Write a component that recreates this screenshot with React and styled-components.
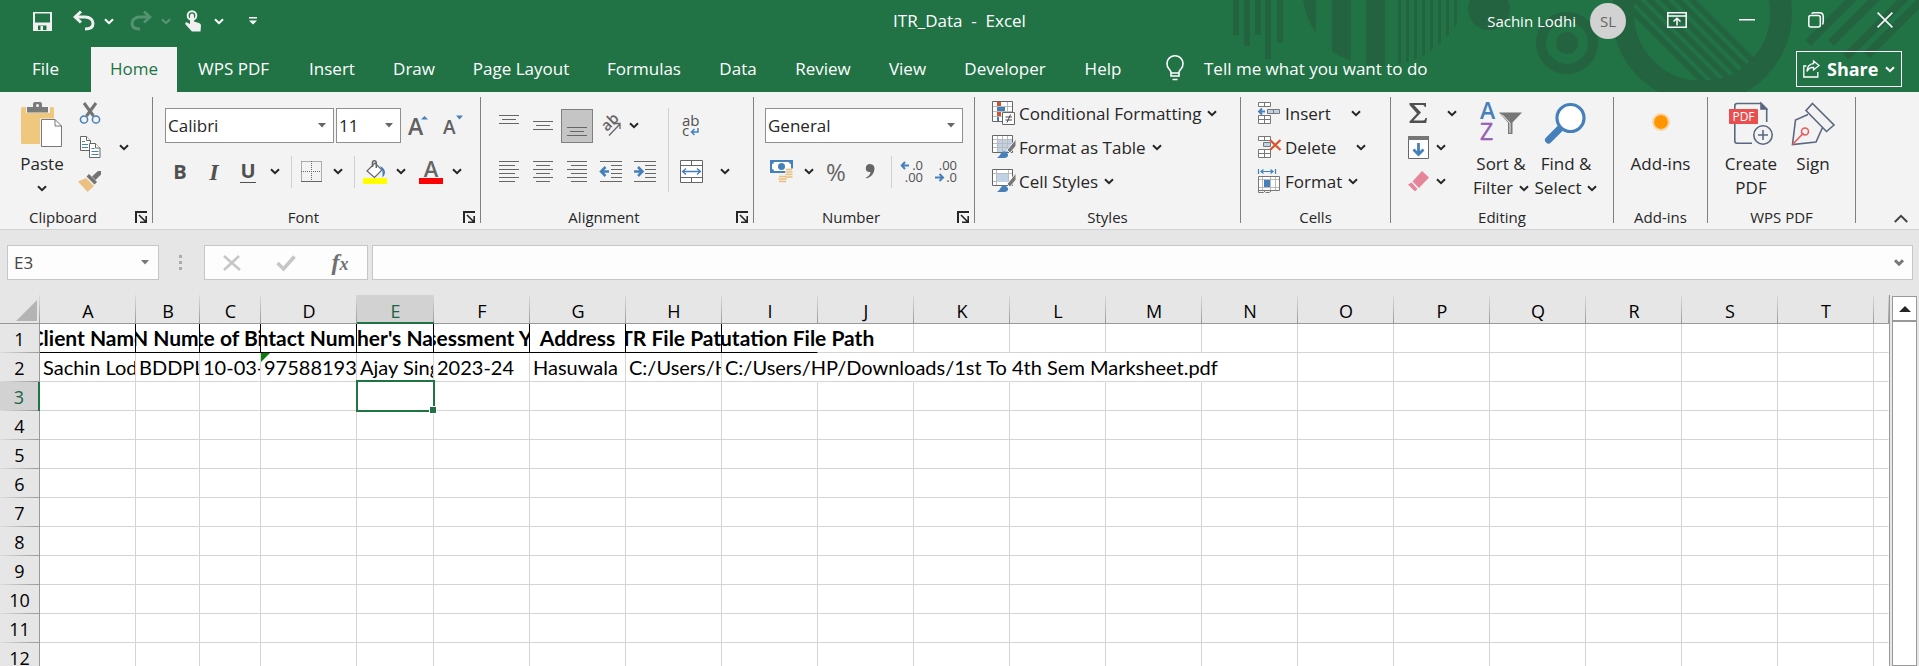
import React from "react";
import styled, { createGlobalStyle, css } from "styled-components";

const GREEN = "#217346";
const INK = "#262626";
const GREY = "#666666";
const BLUE = "#4680ba";

const GlobalStyle = createGlobalStyle`
  *, *::before, *::after { box-sizing: border-box; }
  html, body { margin: 0; background: #e6e6e6; }
  body, button, input, select {
    font-family: "Open Sans", "Noto Sans", sans-serif;
    font-size: 17px;
    color: ${INK};
  }
  button {
    border: 0;
    padding: 0;
    background: none;
    white-space: nowrap;
  }
  svg { display: block; flex: none; overflow: visible; }
`;

const Window = styled.div`
  display: flex;
  flex-direction: column;
  height: 100vh;
  overflow: hidden;
`;

/* ---------- title bar and tabs ---------- */

const Header = styled.header`
  position: relative;
  flex: none;
  overflow: hidden;
  background: ${GREEN};
  color: #fff;
`;

const Backdrop = styled.svg`
  position: absolute;
  top: 0;
  right: 0;
`;

const TitleBar = styled.div`
  position: relative;
  display: grid;
  grid-template-columns: 1fr auto 1fr;
  align-items: start;
  height: 47px;
`;

const QuickAccess = styled.div`
  display: flex;
  align-items: center;
  height: 42px;
  padding-left: 24px;
`;

const QuickButton = styled.button`
  display: flex;
  align-items: center;
  justify-content: center;
  width: ${(p) => p.$w}px;
  height: 42px;
  margin-left: ${(p) => p.$gap || 0}px;
  color: #fff;
  opacity: ${(p) => (p.disabled ? 0.25 : 1)};
`;

const DocTitle = styled.h1`
  margin: 0;
  font-size: 17px;
  font-weight: 400;
  line-height: 42px;
  white-space: pre;
`;

const WindowTools = styled.div`
  display: flex;
  align-items: center;
  justify-content: flex-end;
  height: 42px;
`;

const UserName = styled.span`
  font-size: 15px;
`;

const Avatar = styled.button`
  width: 36px;
  height: 36px;
  margin: 0 15px 0 14px;
  border-radius: 50%;
  background: #d2d2d2;
  color: #646464;
  font-size: 15px;
`;

const TabBar = styled.nav`
  position: relative;
  display: flex;
  align-items: stretch;
  height: 45px;
`;

const Tab = styled.button`
  width: ${(p) => p.$w}px;
  padding-bottom: 2px;
  color: #fff;
  ${(p) =>
    p.$active &&
    css`
      background: #f3f3f3;
      color: ${GREEN};
    `}
`;

const TellMe = styled.button`
  display: flex;
  align-items: center;
  gap: 20px;
  margin: 0 auto 0 25px;
  padding-bottom: 2px;
  color: #fff;
`;

const ShareButton = styled.button`
  display: flex;
  align-items: center;
  gap: 7px;
  width: 106px;
  height: 36px;
  margin: 4px 17px 0 0;
  padding-left: 6px;
  border: 1px solid #fff;
  color: #fff;
  font-size: 18px;
  font-weight: 700;
`;

/* ---------- ribbon ---------- */

const Ribbon = styled.div`
  display: flex;
  flex: none;
  height: 138px;
  padding-top: 5px;
  background: #f3f3f3;
  border-bottom: 1px solid #d2d2d2;
`;

const GroupBox = styled.section`
  display: flex;
  flex-direction: column;
  flex: none;
  width: ${(p) => p.$w}px;
  height: 132px;
  background: linear-gradient(#808080, #808080) right top / 1px 126px no-repeat;
`;

const GroupBody = styled.div`
  display: flex;
  flex: none;
  height: 108px;
  padding-left: ${(p) => p.$pad}px;
`;

const GroupCaption = styled.footer`
  display: flex;
  align-items: center;
  height: 24px;
  padding-right: 1px;
  font-size: 15px;
  line-height: 24px;
`;

const CaptionText = styled.span`
  flex: 1;
  text-align: center;
`;

const Launcher = styled.button`
  display: flex;
  justify-content: flex-end;
  width: 26px;
  padding-right: 5px;
`;

const Rows = styled.div`
  display: flex;
  flex-direction: column;
  gap: 11px;
  padding-top: 11px;
`;

const Row = styled.div`
  display: flex;
  align-items: center;
  height: 35px;
`;

const FieldRow = styled(Row)`
  gap: 2px;
  padding-left: 2px;
`;

const List = styled.div`
  display: flex;
  flex-direction: column;
`;

const ListRow = styled.div`
  display: flex;
  align-items: center;
  height: 34px;
  padding-bottom: 2px;
`;

const Tool = styled.button`
  display: flex;
  align-items: center;
  justify-content: center;
  width: ${(p) => p.$w || 34}px;
  height: 34px;
  ${(p) =>
    p.$pressed &&
    css`
      width: 32px;
      margin: 0 1px;
      background: #c5c5c5;
      border: 1px solid #808080;
    `}
`;

const Letter = styled.span`
  color: #505050;
  font-family: ${(p) => (p.$serif ? '"Liberation Serif", serif' : "inherit")};
  font-size: ${(p) => p.$size || 20}px;
  font-weight: 700;
  font-style: ${(p) => (p.$italic ? "italic" : "normal")};
  line-height: 22px;
  border-bottom: ${(p) => (p.$underline ? "1px solid #505050" : "0")};
`;

const Percent = styled.span`
  color: ${GREY};
  font-size: 24px;
`;

const TextTool = styled.button`
  display: flex;
  align-items: center;
  gap: 3px;
  height: 34px;
`;

const Rule = styled.span`
  flex: none;
  width: 1px;
  height: ${(p) => p.$h || 32}px;
  margin: 0 ${(p) => p.$right}px 0 ${(p) => p.$left}px;
  background: #d0d0d0;
`;

const BigTool = styled.button`
  display: flex;
  flex-direction: column;
  align-items: center;
  width: ${(p) => p.$w}px;
  padding-top: 5px;
  line-height: 24px;
`;

const BigIcon = styled.span`
  display: flex;
  justify-content: center;
  height: 50px;
`;

const BigLine = styled.span`
  display: flex;
  align-items: center;
  gap: 6px;
  height: 24px;
`;

const Combo = styled.span`
  position: relative;
  display: block;
  width: ${(p) => p.$w}px;
  height: 35px;

  select {
    width: 100%;
    height: 100%;
    padding: 0 2px;
    appearance: none;
    background: #fff;
    border: 1px solid #8f8f8f;
    border-radius: 0;
  }

  svg {
    position: absolute;
    top: 15px;
    right: 8px;
    pointer-events: none;
  }
`;

const Collapse = styled.button`
  display: flex;
  align-items: flex-end;
  margin-left: auto;
  padding: 0 11px 6px;
`;

/* ---------- formula bar ---------- */

const FormulaBar = styled.div`
  display: flex;
  align-items: center;
  flex: none;
  height: 65px;
  padding: 0 6px 0 7px;
`;

const Field = styled.div`
  display: flex;
  align-items: center;
  width: ${(p) => (p.$w ? p.$w + "px" : "auto")};
  flex: ${(p) => (p.$w ? "none" : 1)};
  height: 35px;
  background: #fdfdfd;
  border: 1px solid #c6c6c6;

  input {
    flex: 1;
    min-width: 0;
    height: 33px;
    padding: 0 6px;
    border: 0;
    background: none;
    color: #444;
  }

  button {
    display: flex;
    align-items: center;
    justify-content: center;
    height: 33px;
  }
`;

const NameArrow = styled.button`
  width: 26px;
`;

const FormulaTool = styled.button`
  width: 54px;
`;

const ExpandButton = styled.button`
  width: 26px;
`;

const Grip = styled.svg`
  margin: 0 22px 0 20px;
`;

const FxField = styled(Field)`
  margin-right: 4px;
`;

const FxLabel = styled.span`
  color: #707070;
  font-family: "Liberation Serif", serif;
  font-size: 24px;
  font-style: italic;
  font-weight: 700;
  line-height: 28px;

  small { font-size: 18px; }
`;

/* ---------- sheet ---------- */

const SheetArea = styled.main`
  display: flex;
  flex: 1;
  min-height: 0;
`;

const SheetView = styled.div`
  flex: 1;
  min-width: 0;
  overflow: hidden;
`;

const Sheet = styled.table`
  width: 100%;
  table-layout: fixed;
  border-collapse: separate;
  border-spacing: 0;
  border-right: 1px solid #999;
  background: #fff;
  font-family: Lato, "Open Sans", sans-serif;
  color: #000;

  th, td {
    height: 29px;
    padding: 0;
  }
`;

const ColHead = styled.th`
  background: linear-gradient(#dcdcdc, #999) right / 1px 100% no-repeat
    ${(p) => (p.$on ? "#d2d2d2" : "#e6e6e6")};
  border-bottom: ${(p) => (p.$on ? "2px solid " + GREEN : "1px solid #999")};
  color: ${(p) => (p.$on ? "#1f6140" : "#000")};
  font-family: "Open Sans", sans-serif;
  font-size: 18px;
  font-weight: 400;
  line-height: ${(p) => (p.$on ? 22 : 24)}px;
  vertical-align: bottom;
`;

const Corner = styled(ColHead)`
  svg { margin: 0 3px 2px auto; }
`;

const RowHead = styled.th`
  background: linear-gradient(90deg, #dcdcdc, #999) bottom / 100% 1px no-repeat
    ${(p) => (p.$on ? "#d2d2d2" : "#e6e6e6")};
  border-right: ${(p) => (p.$on ? "2px solid " + GREEN : "1px solid #999")};
  color: ${(p) => (p.$on ? "#1f6140" : "#000")};
  font-family: "Open Sans", sans-serif;
  font-size: 18px;
  font-weight: 400;
  line-height: 28px;
`;

const Cell = styled.td`
  position: relative;
  border-right: 1px solid
    ${(p) => (p.$open ? "transparent" : p.$boxed ? "#000" : "#d4d4d4")};
  border-bottom: 1px solid ${(p) => (p.$under ? "#000" : "#d4d4d4")};
`;

const CellText = styled.div`
  display: flex;
  justify-content: ${(p) => (p.$head ? "center" : "flex-start")};
  height: 28px;
  padding: 0 ${(p) => (p.$head ? 0 : 3)}px;
  font-size: ${(p) => (p.$head ? 21 : 20)}px;
  font-weight: ${(p) => (p.$head ? 700 : 400)};
  line-height: 28px;
  white-space: nowrap;
  clip-path: inset(0 ${(p) => (p.$spill ? "-600px" : "0")} 0 0);
`;

const ErrorMark = styled.svg`
  position: absolute;
  top: 0;
  left: 0;
`;

const Selection = styled.span`
  position: absolute;
  inset: -2px -2px -2px -1px;
  z-index: 1;
  border: 2px solid ${GREEN};

  &::after {
    content: "";
    position: absolute;
    right: -4px;
    bottom: -4px;
    width: 8px;
    height: 8px;
    background: ${GREEN};
    border: 1px solid #fff;
  }
`;

const ScrollBar = styled.div`
  display: flex;
  flex-direction: column;
  flex: none;
  width: 25px;
  margin: 1px 2px 0;
`;

const ScrollUp = styled.button`
  display: flex;
  align-items: center;
  justify-content: center;
  height: 25px;
  background: #fff;
  border: 1px solid #999;
`;

const ScrollTrack = styled.div`
  flex: 1;
  background: #fff;
  border: 1px solid #999;
`;

/* ---------- drawings ---------- */

const Chevron = ({ color = INK, w = 10, sw = 2 }) => (
  <svg width={w} height="7" viewBox="0 0 10 7" fill="none" stroke={color} strokeWidth={sw}>
    <path d="M1 1.2 5 5.2 9 1.2" />
  </svg>
);

const Triangle = ({ color = GREY }) => (
  <svg width="8" height="5" viewBox="0 0 8 5">
    <path d="M0 0h8L4 4.6z" fill={color} />
  </svg>
);

const HeaderArt = () => (
  <Backdrop width="700" height="92" viewBox="1219 0 700 92" aria-hidden="true">
    <defs>
      <clipPath id="barsClip"><circle cx="1381" cy="-22" r="88" /></clipPath>
      <clipPath id="ringClip"><circle cx="1702" cy="13" r="69" /></clipPath>
    </defs>
    <g fill="#236340">
      <path d="M1233 0h6v35h-6zM1244 0h6v46h-6zM1255 0h6v35h-6zM1265 0h6v59h-6zM1277 0h6v42h-6z" />
      <path d="M1303 0h13v33q-10-14-13-33z" />
      <path
        clipPath="url(#barsClip)"
        d="M1332 0h19v92h-19zM1366 0h19v92h-19zM1398 0h3v92h-3zM1406 0h3v92h-3zM1414 0h3v92h-3zM1422 0h3v92h-3zM1430 0h3v92h-3zM1438 0h3v92h-3zM1446 0h3v92h-3zM1454 0h3v92h-3z"
      />
      <circle cx="1489" cy="9" r="21" />
      <circle cx="1567" cy="43" r="11" />
    </g>
    <circle cx="1567" cy="43" r="26" fill="none" stroke="#236340" strokeWidth="10" />
    <circle cx="1702" cy="13" r="79" fill="none" stroke="#236340" strokeWidth="22" />
    <g clipPath="url(#ringClip)" stroke="#236340" strokeWidth="6">
      <path d="M1610-12 1710 88M1622-14 1722 86M1632-18 1732 82M1643-21 1743 79M1654-24 1754 76M1665-27 1765 73" />
    </g>
    <g stroke="#236340" strokeWidth="8">
      <path d="M1808 43 1856-5M1831 43 1879-5M1846 57 1908-5M1867 55 1927-5" />
    </g>
  </Backdrop>
);

const SaveIcon = () => (
  <svg width="19" height="19" viewBox="0 0 19 19" fill="#f0f0f0">
    <path fillRule="evenodd" d="M0 0h19v19H0zM2 1.500v9h15v-9zM5 13.500V18h8.500v-4.500z" />
    <path d="M7.500 14H10v4H7.500z" />
  </svg>
);

const UndoIcon = ({ flip }) => (
  <svg width="22" height="20" viewBox="0 0 22 20" fill="none" stroke="#f0f0f0" strokeWidth="3">
    <g transform={flip ? "translate(22 0) scale(-1 1)" : undefined}>
      <path d="M2 6h10c5 0 8 3 8 6.500S17 18 12 18" />
      <path d="M8 0.500 2.200 6 8 11.500" />
    </g>
  </svg>
);

const TouchIcon = () => (
  <svg width="16" height="22" viewBox="0 0 16 22">
    <circle cx="7" cy="5.500" r="4.300" fill="none" stroke="#f0f0f0" strokeWidth="2" />
    <path d="M5 5.500a2 2 0 0 1 4 0v6l5 1.500q2 .6 2 2.500l-.5 6H7L.8 14.800q-1.500-2 .8-2.500L5 14z" fill="#f0f0f0" />
  </svg>
);

const CustomizeIcon = () => (
  <svg width="8" height="8" viewBox="0 0 8 8" fill="#fff">
    <path d="M0 0h8v1.500H0zM0 3.500h8L4 7.500z" />
  </svg>
);

const RibbonOptionsIcon = () => (
  <svg width="20" height="18" viewBox="0 0 20 18" fill="none" stroke="#fff" strokeWidth="1.500">
    <path d="M.8.8h18.400v14.400H.8zM1 4h18M10 13.500V6.500M6.500 9.500 10 6.200l3.500 3.300" />
  </svg>
);

const MinimizeIcon = () => (
  <svg width="16" height="5" viewBox="0 0 16 5"><path d="M0 0h16v1.500H0z" fill="#fff" /></svg>
);

const RestoreIcon = () => (
  <svg width="16" height="18" viewBox="0 0 16 18" fill="none" stroke="#fff" strokeWidth="1.500">
    <rect x=".8" y="3.500" width="11.500" height="11.500" rx="2" />
    <path d="M3.500 1.500Q4.500.8 6 .8h5.500q3.700 0 3.700 3.700V10q0 1.500-.8 2.500" />
  </svg>
);

const CloseIcon = () => (
  <svg width="16" height="18" viewBox="0 0 16 18" stroke="#fff" strokeWidth="1.500">
    <path d="M.6.6 15.400 15.400M15.400.6.6 15.400" />
  </svg>
);

const BulbIcon = () => (
  <svg width="18" height="25" viewBox="0 0 18 25" fill="none" stroke="#fff" strokeWidth="1.600">
    <path d="M5 20v-3.500Q4.800 14.500 3 13A8 8 0 1 1 15 13q-1.800 1.500-2 3.500V20zM5 17h8M6.500 23.500h5" />
  </svg>
);

const ShareIcon = () => (
  <svg width="17" height="18" viewBox="0 0 17 18" fill="none" stroke="#fff" strokeWidth="1.300">
    <path d="M3.500 6H.8v11h14V12M10.500 1 16 5.500 10.500 10V7.300Q6 7 4 11.500 4.500 4 10.500 3.700z" />
  </svg>
);

const PasteIcon = () => (
  <svg width="42" height="46" viewBox="0 0 42 46">
    <rect y="5" width="33" height="37" rx="1.500" fill="#efc87e" />
    <path d="M5 4h24v7H5z" fill="#f3f3f3" />
    <path d="M6 5h6V2q0-2 2-2h5q2 0 2 2v3h6v5.500H6z" fill="#7b7b7b" />
    <circle cx="16.500" cy="3.500" r="1.500" fill="#f3f3f3" />
    <path d="M19 16.500h22V46H19z" fill="#f3f3f3" />
    <path d="M20.500 17.500H34l6.500 6.500v20.500h-20z" fill="#fff" stroke="#777" />
    <path d="M34 17.500V24h6.500" fill="none" stroke="#777" />
  </svg>
);

const CutIcon = () => (
  <svg width="20" height="22" viewBox="0 0 20 22" fill="none">
    <path d="M4 1 13.500 14M16 1 6.500 14" stroke="#737373" strokeWidth="3" />
    <circle cx="4" cy="17.500" r="3.600" stroke={BLUE} strokeWidth="1.500" />
    <circle cx="16" cy="17.500" r="3.600" stroke={BLUE} strokeWidth="1.500" />
  </svg>
);

const CopyIcon = () => (
  <svg width="21" height="22" viewBox="0 0 21 22" fill="#fff" stroke={GREY}>
    <path d="M.5.500h6l4 4v10H.5z" />
    <path d="M6.500.500v4h4" />
    <path d="M2 5.500h3M2 8.500h6M2 11.500h6" stroke={BLUE} />
    <path d="M9.500 7.500h6l4.500 4.500v9.500H9.500z" />
    <path d="M15.500 7.500V12H20" />
    <path d="M11.500 12.500h3M11.500 15.500h7M11.500 18.500h7" stroke={BLUE} />
  </svg>
);

const PainterIcon = () => (
  <svg width="24" height="21" viewBox="0 0 24 21">
    <path d="M0 10.500 8 7l8 8-6.500 6Z" fill="#ebc183" />
    <path d="M8.500 5.500 11 3l8 8-2.500 2.500zM14 5.500 20 0h3v3.500L17.500 9z" fill="#737373" />
  </svg>
);

const SizeIcon = ({ up }) => (
  <svg width="22" height="24" viewBox="0 0 22 24">
    <text x="0" y={up ? 21 : 20} fontSize={up ? 23 : 19} fontWeight="600" fill="#606060">A</text>
    <path d={up ? "M13 5.500h7L16.500 2z" : "M13 1.500h7L16.500 5.500z"} fill={BLUE} />
  </svg>
);

const BordersIcon = () => (
  <svg width="21" height="21" viewBox="0 0 21 21" stroke={GREY} fill="none">
    <path d="M.5.500h20v20M.5.500v20M10.500 0v20M0 10.500h20" strokeDasharray="1 1" />
    <path d="M0 20.500h21" />
  </svg>
);

const FillIcon = () => (
  <svg width="24" height="24" viewBox="0 0 24 24">
    <path d="M0 18h24v6H0z" fill="#ff0" />
    <path d="M12 3 4 11l7.500 6.500L19 10z" fill="#fff" stroke={GREY} strokeWidth="1.200" />
    <path d="M9.500 7V2.500q0-1.800 1.800-1.800t2 1.800V8" fill="none" stroke={GREY} strokeWidth="1.500" />
    <path d="M17 6q5 2 5 6.500 0 3-2.500 5V11z" fill={BLUE} />
  </svg>
);

const FontColorIcon = () => (
  <svg width="24" height="24" viewBox="0 0 24 24">
    <text x="12" y="17" fontSize="22" fontWeight="600" fill={GREY} textAnchor="middle">A</text>
    <path d="M0 18h24v6H0z" fill="#f00" />
  </svg>
);

const Lines = ({ h = 22, d }) => (
  <svg width="20" height={h} viewBox={`0 0 20 ${h}`} stroke={GREY} fill="none"><path d={d} /></svg>
);
const TopLines = () => <Lines h={30} d="M0 4.500h20M3 8.500h14M0 12.500h20" />;
const MiddleLines = () => <Lines h={30} d="M0 10.500h20M3 14.500h14M0 18.500h20" />;
const BottomLines = () => <Lines h={30} d="M0 16.500h20M3 20.500h14M0 24.500h20" />;
const LeftLines = () => <Lines d="M0 .500h20M0 4.500h16M0 8.500h20M0 12.500h16M0 16.500h20M0 20.500h16" />;
const CenterLines = () => <Lines d="M0 .500h20M3 4.500h14M0 8.500h20M3 12.500h14M0 16.500h20M3 20.500h14" />;
const RightLines = () => <Lines d="M0 .500h20M4 4.500h16M0 8.500h20M4 12.500h16M0 16.500h20M4 20.500h16" />;

const IndentIcon = ({ right }) => (
  <svg width="22" height="22" viewBox="0 0 22 22" fill="none">
    <path d="M0 .500h22M11 4.500h11M11 8.500h11M11 12.500h11M11 16.500h11M0 20.500h22" stroke={GREY} />
    <path d={right ? "M0 10.500h8M4 6l4.500 4.500L4 15" : "M9 10.500H1M5.500 6 1 10.500 5.500 15"} stroke={BLUE} strokeWidth="2.500" />
  </svg>
);

const OrientationIcon = () => (
  <svg width="22" height="22" viewBox="0 0 22 22">
    <text transform="translate(7 17) rotate(-45)" fontSize="15" fontWeight="600" fill={GREY}>ab</text>
    <path d="M9 20.500 19.500 9.500M14.500 8.500h5.500V14" fill="none" stroke={GREY} strokeWidth="1.300" />
  </svg>
);

const WrapIcon = () => (
  <svg width="20" height="24" viewBox="0 0 20 24">
    <text x="1" y="12" fontSize="15" fill="#505050">ab</text>
    <text x="1" y="22" fontSize="15" fill="#505050">c</text>
    <path d="M17 14v4h-6M13.500 15 10.500 18l3 3" fill="none" stroke={BLUE} strokeWidth="1.500" />
  </svg>
);

const MergeIcon = () => (
  <svg width="23" height="23" viewBox="0 0 23 23" fill="#fff" stroke={GREY}>
    <path d="M.5.500h22v22H.5zM.5 5.500h22M.5 17.500h22M11.500.500v5M11.500 17.500v5" />
    <path d="M2.500 11.500h18M6 8.500l-3.500 3L6 14.500M17 8.500l3.500 3L17 14.500" fill="none" stroke={BLUE} strokeWidth="1.300" />
  </svg>
);

const MoneyIcon = () => (
  <svg width="24" height="23" viewBox="0 0 24 23">
    <path d="M0 0h23v13H0z" fill={BLUE} />
    <path d="M4 2h15q0 2 2 2v5q-2 0-2 2H4q0-2-2-2V4q2 0 2-2z" fill="#fff" />
    <circle cx="11.500" cy="6.500" r="3.500" fill={BLUE} />
    <path d="M15 8.500h8v8.500h-6v5.500H8v-7h7z" fill="#f3f3f3" />
    <path d="M16 9.500h6M15.500 12h7M15.500 14.500h7M15.500 17h7M9 16.500h7M8.500 19h8M9 21.500h7" stroke="#e9be7e" strokeWidth="1.600" />
  </svg>
);

const CommaIcon = () => (
  <svg width="10" height="15" viewBox="0 0 10 15">
    <path d="M5 0q4.500.2 4.500 5Q9 12 1.500 14.500L1 13.500Q5 11.500 5.500 8 .8 8.500.8 4.200.8.200 5 0z" fill={GREY} />
  </svg>
);

const DecimalIcon = ({ less }) => (
  <svg width="22" height="24" viewBox="0 0 22 24">
    <g fontSize="13" fill="#505050" textAnchor="end">
      <text x="22" y="10">{less ? ".00" : ".0"}</text>
      <text x="22" y="22">{less ? ".0" : ".00"}</text>
    </g>
    <path d={less ? "M0 17.500h7.500M4.500 14 8 17.500 4.500 21" : "M8 5.500H.8M4 2 .8 5.500 4 9"} fill="none" stroke={BLUE} strokeWidth="2" />
  </svg>
);

const ConditionalIcon = () => (
  <svg width="24" height="24" viewBox="0 0 24 24" fill="#fff">
    <path d="M.5.500h20v20H.5z" stroke={GREY} />
    <path d="M1 5.500h19M1 10.500h19M1 15.500h19M5.500 1v19M15.500 1v19" stroke="#bbb" />
    <path d="M5 1h4v4H5zM5 11h4v4H5z" fill="#d35230" />
    <path d="M5 6h8v4H5zM5 16h2v4H5z" fill={BLUE} />
    <path d="M10.500 11.500h12v12h-12z" stroke={GREY} />
    <path d="M13.500 16h6.500M13.500 19h6.500M18.500 13.500 15 21.500" stroke="#444" />
  </svg>
);

const Brush = () => (
  <g>
    <path d="M24 4v7l-6 7-3-3z" fill="#777" stroke="#f3f3f3" />
    <path d="M5 23q2.500-1.500 3.500-4 2-3.500 5-2.500l2.500 2.500q.5 4-4 4z" fill={BLUE} />
  </g>
);

const TableStyleIcon = () => (
  <svg width="24" height="24" viewBox="0 0 24 24" fill="#fff">
    <path d="M.5.500h20v17H.5z" stroke={GREY} />
    <path d="M6 5h14v12H6z" fill="#c1d2e6" />
    <path d="M1 4.500h19M1 8.500h19M1 12.500h19M5.500 1v16M10.500 1v16M15.500 1v16" stroke="#bbb" />
    <Brush />
  </svg>
);

const CellStyleIcon = () => (
  <svg width="24" height="24" viewBox="0 0 24 24" fill="#fff">
    <path d="M.5.500h20v16H.5z" stroke={GREY} />
    <path d="M1 4.500h19M1 12.500h19M4.500 1v15M16.500 1v15" stroke="#bbb" />
    <path d="M5 5h11v8H5z" fill="#c1d2e6" />
    <Brush />
  </svg>
);

const InsertCellsIcon = () => (
  <svg width="24" height="23" viewBox="0 0 24 23" fill="#fff" stroke="#777">
    <path d="M.5.500h12v4H.5zM6.500.500v4M.5 13.500h12v8H.5zM.5 17.500h12M6.500 13.500v8" />
    <path d="M9.500 7.500h12v4h-12zM15.500 7.500v4" fill="#c1d2e6" />
    <path d="M7 9.500H1M4 6.500 1 9.500l3 3" fill="none" stroke={BLUE} strokeWidth="1.800" />
  </svg>
);

const DeleteCellsIcon = () => (
  <svg width="24" height="23" viewBox="0 0 24 23" fill="#fff" stroke="#777">
    <path d="M.5.500h12v4H.5zM6.500.500v4M.5 13.500h12v8H.5zM.5 17.500h12M6.500 13.500v8" />
    <path d="M5.500 6.500h7v4h-7z" fill="#c1d2e6" />
    <path d="M12 4 22.500 14M22.500 4 12 14" stroke="#d9532c" strokeWidth="2.200" />
  </svg>
);

const FormatCellsIcon = () => (
  <svg width="24" height="25" viewBox="0 0 24 25" fill="#fff">
    <path d="M.5 7.500h21v14H.5z" stroke="#777" />
    <path d="M1 10.500h20M1 18.500h20M4.500 8v13M12.500 8v13M17.500 8v13" stroke="#bbb" />
    <path d="M6 11h6v7H6z" fill={BLUE} />
    <path d="M.5 0v5M17.500 0v5M3 2.500h12M5.500.500l-2.500 2 2.500 2M12.500.500l2.500 2-2.500 2" fill="none" stroke={BLUE} strokeWidth="1.200" />
    <path d="M.5 21.500v2h5l2-2M7.500 23.500h4l2-2" fill="none" stroke="#777" />
  </svg>
);

const SumIcon = () => (
  <svg width="18" height="20" viewBox="0 0 18 20">
    <path d="M.5 0H17v4h-1.200q-.3-2-2-2H5l7 7.500-7.500 8H14q2 0 2.500-2.500H18l-.8 5H.5v-1.500L8 10.500.5 2z" fill="#505050" />
  </svg>
);

const FillDownIcon = () => (
  <svg width="21" height="23" viewBox="0 0 21 23" fill="#fff">
    <path d="M.5.500h20v22H.5z" stroke={GREY} />
    <path d="M0 0h21v4H0z" fill="#777" />
    <path d="M10.500 7v11.500M5.500 13.500l5 5 5-5" fill="none" stroke={BLUE} strokeWidth="2.800" />
  </svg>
);

const EraserIcon = () => (
  <svg width="21" height="20" viewBox="0 0 21 20" fill="#e5859a">
    <path d="M14 0 21 6.500 11 17 4.500 10.500zM3.500 11.500 9.500 18l-2 2h-1L0 13.500z" />
  </svg>
);

const SortIcon = () => (
  <svg width="42" height="42" viewBox="0 0 42 42">
    <text x="0" y="17" fontSize="23" fontWeight="600" fill={BLUE}>A</text>
    <text x="0" y="38" fontSize="23" fill="#9460b4" stroke="#9460b4" strokeWidth=".5">Z</text>
    <path d="M19 10.500h23l-9.500 10V32H28V20.500z" fill="#777" />
    <path d="M22 12.500 30 21v10" fill="none" stroke="#f3f3f3" />
  </svg>
);

const FindIcon = () => (
  <svg width="42" height="42" viewBox="0 0 42 42">
    <path d="M3.500 38 17 24.500" stroke={BLUE} strokeWidth="7" strokeLinecap="round" />
    <circle cx="25.500" cy="16" r="13.500" fill="#fff" stroke={BLUE} strokeWidth="3.200" />
  </svg>
);

const AddinsIcon = () => (
  <svg width="18" height="40" viewBox="0 0 18 40">
    <circle cx="9" cy="20" r="7" fill="#ff9500" />
    <circle cx="9" cy="20" r="8" fill="none" stroke="#ffb95a" strokeOpacity=".5" strokeWidth="2" />
  </svg>
);

const CreatePdfIcon = () => (
  <svg width="44" height="44" viewBox="0 0 44 44" fill="none" stroke="#5b6780" strokeWidth="1.600">
    <path d="M23 41.200H8q-2.200 0-2.200-2.200V4Q5.800 1.500 8.200 1.500h24l5.500 5.500v13" />
    <path d="M32 1.500V7h5.500z" fill="#5b6780" />
    <path d="M0 7h28q1 0 1 1v14H1q-1 0-1-1z" fill="#ea4f4f" stroke="none" />
    <circle cx="34" cy="33" r="9.200" fill="#f3f3f3" />
    <path d="M34 28v10M29 33h10" />
    <text x="14.500" y="19" fontSize="12" fill="#fff" stroke="none" textAnchor="middle">PDF</text>
  </svg>
);

const SignIcon = () => (
  <svg width="44" height="44" viewBox="0 0 44 44" fill="none" stroke="#5b6780" strokeWidth="1.600">
    <path d="M21.500 1.500 43 23l-7.500 6.500L15 8.500zM17 12.500 4.500 18 1.500 42.500 25 40l6.500-14.500" />
    <path d="M1.500 42.500 12.500 31" stroke="#ea5a5a" />
    <circle cx="14" cy="29.500" r="3.500" stroke="#ea5a5a" />
  </svg>
);

const LauncherIcon = () => (
  <svg width="12" height="12" viewBox="0 0 12 12" fill="none" stroke={INK}>
    <path d="M1 12V1h11" strokeWidth="2" />
    <path d="M4 4l7 7M11.200 5v6.200H5" strokeWidth="1.600" />
  </svg>
);

/* ---------- parts ---------- */

const Group = ({ title, w, pad = 0, launcher, children }) => (
  <GroupBox $w={w} aria-label={title}>
    <GroupBody $pad={pad}>{children}</GroupBody>
    <GroupCaption>
      <CaptionText>{title}</CaptionText>
      {launcher && <Launcher aria-label={`${title} settings`}><LauncherIcon /></Launcher>}
    </GroupCaption>
  </GroupBox>
);

const Drop = ({ w, label }) => (
  <Tool $w={w} aria-label={`${label} options`}><Chevron /></Tool>
);

const ComboBox = ({ w, label, value }) => (
  <Combo $w={w}>
    <select aria-label={label} defaultValue={value}><option>{value}</option></select>
    <Triangle />
  </Combo>
);

const ListTool = ({ icon, label, gap }) => (
  <ListRow>
    <TextTool>{icon}{label}</TextTool>
    <Drop w={gap} label={label} />
  </ListRow>
);

const TABS = [
  ["Home", 86], ["WPS PDF", 113], ["Insert", 84], ["Draw", 80], ["Page Layout", 134],
  ["Formulas", 112], ["Data", 76], ["Review", 94], ["View", 75], ["Developer", 120], ["Help", 76],
];

const COLUMNS = [
  ["A", 96], ["B", 64], ["C", 61], ["D", 96], ["E", 77], ["F", 96], ["G", 96], ["H", 96],
  ["I", 96], ["J", 96], ["K", 96], ["L", 96], ["M", 96], ["N", 96], ["O", 96], ["P", 96],
  ["Q", 96], ["R", 96], ["S", 96], ["T", 96],
];

const HEADINGS = [
  "Client Name", "PAN Number", "Date of Birth", "Contact Number", "Father's Name",
  "Assessment Year", "Address", "ITR File Path", "Computation File Path",
];

const RECORD = [
  "Sachin Lodhi", "BDDPL", "10-03-", "975881932", "Ajay Singh", "2023-24",
  "Hasuwala", "C:/Users/HP", "C:/Users/HP/Downloads/1st To 4th Sem Marksheet.pdf",
];

const DATA = { 1: HEADINGS, 2: RECORD };
/* column indexes whose right grid line is covered by overflowing text */
const OPEN = { 1: [8], 2: [8, 9, 10, 11, 12] };
const ROW_NUMBERS = Array.from({ length: 12 }, (_, i) => i + 1);

const SheetRow = ({ n }) => {
  const values = DATA[n] || [];
  const head = n === 1;
  return (
    <tr>
      <RowHead scope="row" $on={n === 3}>{n}</RowHead>
      {COLUMNS.map(([name], i) => (
        <Cell
          key={name}
          $boxed={head && i < 8}
          $under={head && i < 9}
          $open={OPEN[n]?.includes(i)}
        >
          {values[i] && <CellText $head={head} $spill={i === 8}>{values[i]}</CellText>}
          {n === 2 && name === "D" && (
            <ErrorMark width="9" height="9" viewBox="0 0 9 9"><path d="M0 0h9L0 9z" fill="#0a7d0a" /></ErrorMark>
          )}
          {n === 3 && name === "E" && <Selection />}
        </Cell>
      ))}
      <Cell $open />
    </tr>
  );
};

export default function App() {
  return (
    <Window>
      <GlobalStyle />
      <Header>
        <HeaderArt />
        <TitleBar>
          <QuickAccess>
            <QuickButton $w={36} aria-label="Save"><SaveIcon /></QuickButton>
            <QuickButton $w={36} $gap={6} aria-label="Undo"><UndoIcon /></QuickButton>
            <QuickButton $w={14} aria-label="Undo history"><Chevron color="#fff" /></QuickButton>
            <QuickButton $w={36} $gap={7} disabled aria-label="Redo"><UndoIcon flip /></QuickButton>
            <QuickButton $w={14} disabled aria-label="Redo history"><Chevron color="#fff" /></QuickButton>
            <QuickButton $w={32} $gap={4} aria-label="Touch mode"><TouchIcon /></QuickButton>
            <QuickButton $w={14} $gap={3} aria-label="Touch mode options"><Chevron color="#fff" /></QuickButton>
            <QuickButton $w={34} $gap={10} aria-label="Customize toolbar"><CustomizeIcon /></QuickButton>
          </QuickAccess>
          <DocTitle>{"ITR_Data  -  Excel"}</DocTitle>
          <WindowTools>
            <UserName>Sachin Lodhi</UserName>
            <Avatar>SL</Avatar>
            <QuickButton $w={72} aria-label="Ribbon display options"><RibbonOptionsIcon /></QuickButton>
            <QuickButton $w={68} aria-label="Minimize"><MinimizeIcon /></QuickButton>
            <QuickButton $w={70} aria-label="Restore"><RestoreIcon /></QuickButton>
            <QuickButton $w={68} aria-label="Close"><CloseIcon /></QuickButton>
          </WindowTools>
        </TitleBar>
        <TabBar>
          <Tab $w={91}>File</Tab>
          {TABS.map(([name, w]) => (
            <Tab key={name} $w={w} $active={name === "Home"}>{name}</Tab>
          ))}
          <TellMe><BulbIcon />Tell me what you want to do</TellMe>
          <ShareButton><ShareIcon />Share<Chevron color="#fff" /></ShareButton>
        </TabBar>
      </Header>

      <Ribbon>
        <Group title="Clipboard" w={153} pad={15} launcher>
          <BigTool $w={54}>
            <BigIcon><PasteIcon /></BigIcon>
            <BigLine>Paste</BigLine>
            <BigLine><Chevron /></BigLine>
          </BigTool>
          <List>
            <ListRow><Tool $w={42} aria-label="Cut"><CutIcon /></Tool></ListRow>
            <ListRow>
              <Tool $w={42} aria-label="Copy"><CopyIcon /></Tool>
              <Drop w={26} label="Copy" />
            </ListRow>
            <ListRow><Tool $w={42} aria-label="Format painter"><PainterIcon /></Tool></ListRow>
          </List>
        </Group>

        <Group title="Font" w={328} pad={10} launcher>
          <Rows>
            <FieldRow>
              <ComboBox w={169} label="Font" value="Calibri" />
              <ComboBox w={65} label="Font size" value="11" />
              <Tool $w={32} aria-label="Increase font size"><SizeIcon up /></Tool>
              <Tool $w={34} aria-label="Decrease font size"><SizeIcon /></Tool>
            </FieldRow>
            <Row>
              <Tool aria-label="Bold"><Letter>B</Letter></Tool>
              <Tool aria-label="Italic"><Letter $serif $italic $size={24}>I</Letter></Tool>
              <Tool aria-label="Underline"><Letter $underline>U</Letter></Tool>
              <Drop w={20} label="Underline" />
              <Rule $left={6} $right={5} />
              <Tool $w={28} aria-label="Borders"><BordersIcon /></Tool>
              <Drop w={26} label="Borders" />
              <Rule $left={3} $right={5} />
              <Tool $w={30} aria-label="Fill color"><FillIcon /></Tool>
              <Drop w={22} label="Fill color" />
              <Tool $w={38} aria-label="Font color"><FontColorIcon /></Tool>
              <Drop w={14} label="Font color" />
            </Row>
          </Rows>
        </Group>

        <Group title="Alignment" w={273} pad={11} launcher>
          <Rows>
            <Row>
              <Tool aria-label="Top align"><TopLines /></Tool>
              <Tool aria-label="Middle align"><MiddleLines /></Tool>
              <Tool $pressed aria-pressed="true" aria-label="Bottom align"><BottomLines /></Tool>
              <Tool aria-label="Orientation"><OrientationIcon /></Tool>
              <Drop w={12} label="Orientation" />
            </Row>
            <Row>
              <Tool aria-label="Align left"><LeftLines /></Tool>
              <Tool aria-label="Center"><CenterLines /></Tool>
              <Tool aria-label="Align right"><RightLines /></Tool>
              <Tool aria-label="Decrease indent"><IndentIcon /></Tool>
              <Tool aria-label="Increase indent"><IndentIcon right /></Tool>
            </Row>
          </Rows>
          <Rows><Rule $h={84} $left={6} $right={5} /></Rows>
          <Rows>
            <Row><Tool aria-label="Wrap text"><WrapIcon /></Tool></Row>
            <Row>
              <Tool aria-label="Merge and center"><MergeIcon /></Tool>
              <Drop w={34} label="Merge" />
            </Row>
          </Rows>
        </Group>

        <Group title="Number" w={221} pad={11} launcher>
          <Rows>
            <Row><ComboBox w={198} label="Number format" value="General" /></Row>
            <Row>
              <Tool aria-label="Accounting format"><MoneyIcon /></Tool>
              <Drop w={20} label="Accounting format" />
              <Tool aria-label="Percent style"><Percent>%</Percent></Tool>
              <Tool aria-label="Comma style"><CommaIcon /></Tool>
              <Rule $left={4} $right={3} />
              <Tool aria-label="Increase decimal"><DecimalIcon /></Tool>
              <Tool aria-label="Decrease decimal"><DecimalIcon less /></Tool>
            </Row>
          </Rows>
        </Group>

        <Group title="Styles" w={266} pad={17}>
          <List>
            <ListTool icon={<ConditionalIcon />} label="Conditional Formatting" gap={22} />
            <ListTool icon={<TableStyleIcon />} label="Format as Table" gap={22} />
            <ListTool icon={<CellStyleIcon />} label="Cell Styles" gap={22} />
          </List>
        </Group>

        <Group title="Cells" w={150} pad={17}>
          <List>
            <ListTool icon={<InsertCellsIcon />} label="Insert" gap={50} />
            <ListTool icon={<DeleteCellsIcon />} label="Delete" gap={50} />
            <ListTool icon={<FormatCellsIcon />} label="Format" gap={22} />
          </List>
        </Group>

        <Group title="Editing" w={223} pad={10}>
          <List>
            <ListRow>
              <Tool aria-label="AutoSum"><SumIcon /></Tool>
              <Drop w={34} label="AutoSum" />
            </ListRow>
            <ListRow>
              <Tool aria-label="Fill"><FillDownIcon /></Tool>
              <Drop w={12} label="Fill" />
            </ListRow>
            <ListRow>
              <Tool aria-label="Clear"><EraserIcon /></Tool>
              <Drop w={12} label="Clear" />
            </ListRow>
          </List>
          <BigTool $w={64}>
            <BigIcon><SortIcon /></BigIcon>
            <BigLine>Sort &amp;</BigLine>
            <BigLine>Filter<Chevron /></BigLine>
          </BigTool>
          <BigTool $w={66}>
            <BigIcon><FindIcon /></BigIcon>
            <BigLine>Find &amp;</BigLine>
            <BigLine>Select<Chevron /></BigLine>
          </BigTool>
        </Group>

        <Group title="Add-ins" w={94}>
          <BigTool $w={93}>
            <BigIcon><AddinsIcon /></BigIcon>
            <BigLine>Add-ins</BigLine>
          </BigTool>
        </Group>

        <Group title="WPS PDF" w={148} pad={12}>
          <BigTool $w={62}>
            <BigIcon><CreatePdfIcon /></BigIcon>
            <BigLine>Create</BigLine>
            <BigLine>PDF</BigLine>
          </BigTool>
          <BigTool $w={62}>
            <BigIcon><SignIcon /></BigIcon>
            <BigLine>Sign</BigLine>
          </BigTool>
        </Group>

        <Collapse aria-label="Collapse ribbon">
          <svg width="14" height="9" viewBox="0 0 14 9" fill="none" stroke="#444" strokeWidth="2">
            <path d="M.8 8 7 1.800 13.200 8" />
          </svg>
        </Collapse>
      </Ribbon>

      <FormulaBar>
        <Field $w={152}>
          <input aria-label="Name box" defaultValue="E3" />
          <NameArrow aria-label="Named ranges"><Triangle color="#777" /></NameArrow>
        </Field>
        <Grip width="3" height="15" viewBox="0 0 3 15"><path d="M0 0h3v3H0zM0 6h3v3H0zM0 12h3v3H0z" fill="#ababab" /></Grip>
        <FxField $w={164}>
          <FormulaTool aria-label="Cancel">
            <svg width="18" height="16" viewBox="0 0 18 16" stroke="#c6c6c6" strokeWidth="2.500"><path d="M1 1 17 15M16 1 1 15" /></svg>
          </FormulaTool>
          <FormulaTool aria-label="Enter">
            <svg width="20" height="16" viewBox="0 0 20 16" fill="none" stroke="#c6c6c6" strokeWidth="3.500"><path d="M1.500 8 7.500 14 18.500 1.500" /></svg>
          </FormulaTool>
          <FormulaTool aria-label="Insert function"><FxLabel>f<small>x</small></FxLabel></FormulaTool>
        </FxField>
        <Field>
          <input aria-label="Formula" defaultValue="" />
          <ExpandButton aria-label="Expand formula bar"><Chevron color="#777" w={12} sw={3} /></ExpandButton>
        </Field>
      </FormulaBar>

      <SheetArea>
        <SheetView>
          <Sheet>
            <colgroup>
              <col width="40" />
              {COLUMNS.map(([name, w]) => <col key={name} width={w} />)}
              <col />
            </colgroup>
            <thead>
              <tr>
                <Corner aria-label="Select all">
                  <svg width="21" height="21" viewBox="0 0 21 21"><path d="M21 0v21H0z" fill="#b4b4b4" /></svg>
                </Corner>
                {COLUMNS.map(([name]) => (
                  <ColHead key={name} scope="col" $on={name === "E"}>{name}</ColHead>
                ))}
                <ColHead />
              </tr>
            </thead>
            <tbody>
              {ROW_NUMBERS.map((n) => <SheetRow key={n} n={n} />)}
            </tbody>
          </Sheet>
        </SheetView>
        <ScrollBar>
          <ScrollUp aria-label="Scroll up">
            <svg width="12" height="6" viewBox="0 0 12 6"><path d="M0 6h12L6 0z" fill={INK} /></svg>
          </ScrollUp>
          <ScrollTrack />
        </ScrollBar>
      </SheetArea>
    </Window>
  );
}
